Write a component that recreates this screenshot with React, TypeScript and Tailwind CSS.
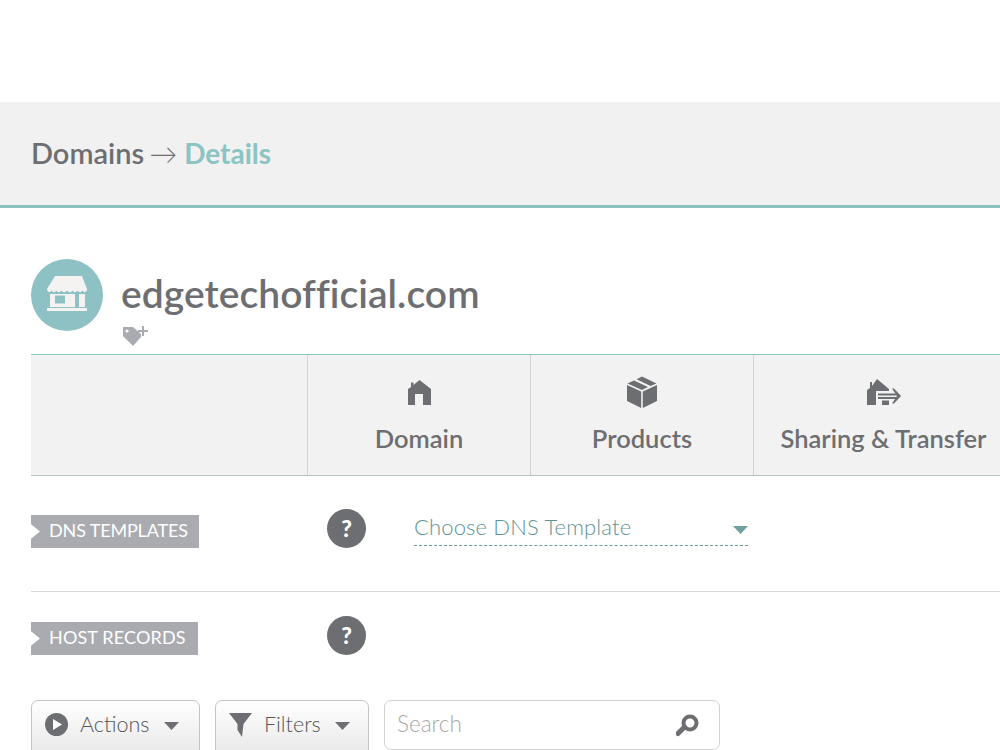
import React from "react";

const font = { fontFamily: '"Lato", "Open Sans", "Liberation Sans", sans-serif' };

function Help() {
  return (
    <div className="flex h-[39px] w-[39px] shrink-0 items-center justify-center rounded-full bg-[#6d6e71] text-[23px] font-black leading-none text-white">
      ?
    </div>
  );
}

function Ribbon({ text, w, ls }: { text: string; w: string; ls: string }) {
  return (
    <div className={`flex h-[33px] ${w} ${ls} items-center bg-[#a9abb0] pb-[3px] pl-[18px] text-[18px] font-normal leading-none text-white [clip-path:polygon(0_0,100%_0,100%_100%,0_100%,0_72%,9px_50%,0_28%)]`}>
      {text}
    </div>
  );
}

function Caret({ color }: { color: string }) {
  return (
    <svg width="15" height="8" viewBox="0 0 15 8" className="shrink-0">
      <path d="M0 0H15L7.5 8Z" fill={color} />
    </svg>
  );
}

function Tab({ icon, label, className }: { icon: React.ReactNode; label: string; className: string }) {
  return (
    <div className={`flex flex-col items-center border-l border-[#d3d3d3] pt-[20px] ${className}`}>
      <div className="flex h-[34px] items-center justify-center">{icon}</div>
      <div className="mt-[12px] whitespace-nowrap text-[25.5px] font-semibold leading-[34px] text-[#6d6e71]">{label}</div>
    </div>
  );
}

export default function App() {
  return (
    <div style={font} className="h-[750px] w-[1000px] overflow-hidden bg-white">
      <div className="h-[102px]" />
      <div className="flex h-[106px] items-center border-b-[3px] border-[#8ac0bf] bg-[#f1f1f1] pb-[2px] pl-[31px]">
        <span className="text-[29px] font-semibold text-[#6d6e71]">Domains</span>
        <span className="ml-[5px] mr-[7px] text-[28px] font-light text-[#6d6e71]">→</span>
        <span className="text-[28px] font-bold text-[#8cc3c3]">Details</span>
      </div>

      <div className="pl-[31px]">
        <div className="flex pt-[51px]">
          <div className="flex h-[72px] w-[72px] items-center justify-center rounded-full bg-[#8dc1c3]">
            <svg width="42" height="38" viewBox="0 0 42 38">
              <path d="M9 0H36L41 13V14H1V13Z" fill="#f5f3f1" />
              <path d="M1 14H41L39 16.5L36.5 14.8L34 16.5L31.5 14.8L29 16.5L26.5 14.8L24 16.5L21 14.8L18 16.5L15.5 14.8L13 16.5L10.5 14.8L8 16.5L5.5 14.8L3 16.5Z" fill="#f5f3f1" />
              <path fillRule="evenodd" d="M4 18H39V31H33V18H29V31H4ZM9 19.5V27.5H19V19.5Z" fill="#f5f3f1" />
              <rect x="1" y="32" width="40" height="3" fill="#f5f3f1" />
            </svg>
          </div>
          <div className="ml-[18px]">
            <div className="mt-[12px] whitespace-nowrap text-[39px] font-semibold leading-[44px] tracking-[0.05px] text-[#6d6e71]">edgetechofficial.com</div>
            <svg width="26" height="22" viewBox="0 0 26 22" className="ml-[2px] mt-[10px]">
              <path d="M0 2H10L18 9V12L10 21L0 11Z" fill="#a9abb0" />
              <circle cx="4" cy="6" r="1.6" fill="#fff" />
              <path d="M19 1H21V5H25V7H21V11H19V7H15V5H19Z" fill="#a9abb0" />
            </svg>
          </div>
        </div>

        <div className="mt-[7px] flex h-[122px] border-b border-t border-b-[#a9c4c1] border-t-[#86c7bb] bg-[#f2f2f2]">
          <div className="w-[276px] shrink-0" />
          <Tab
            className="w-[223px] shrink-0"
            label="Domain"
            icon={
              <svg width="23" height="25" viewBox="0 0 23 25" className="mt-[1px]">
                <path fillRule="evenodd" d="M0 9L3 7V2.5H5.5V5L11.5 0L23 9V25H15V14H7V25H0Z" fill="#6d6e71" />
              </svg>
            }
          />
          <Tab
            className="w-[223px] shrink-0"
            label="Products"
            icon={
              <svg width="32" height="32" viewBox="0 0 32 32">
                <path d="M1 9L15.2 15.5V32L1 25Z" fill="#6d6e71" />
                <path d="M31 9L16.8 15.5V32L31 25Z" fill="#6d6e71" />
                <path d="M1.5 7.5L8 4.4L22 11L16 14Z" fill="#6d6e71" />
                <path d="M10.5 3.2L16 0.5L30.5 7.5L24.5 10Z" fill="#6d6e71" />
              </svg>
            }
          />
          <Tab
            className="w-[260px] shrink-0"
            label="Sharing & Transfer"
            icon={
              <svg width="34" height="26" viewBox="0 0 34 26">
                <path d="M0 11L3 9V3H5V7L10 0L22 10V12H9V26H0Z" fill="#6d6e71" />
                <rect x="11" y="14.5" width="19" height="2" fill="#6d6e71" />
                <rect x="11" y="18" width="19" height="2" fill="#6d6e71" />
                <path d="M25 9.5L27 9.5L34 17L27 24.5L25 24.5L30 17Z" fill="#6d6e71" />
                <rect x="15" y="21.5" width="7" height="4.5" fill="#6d6e71" />
              </svg>
            }
          />
        </div>

        <div className="flex h-[116px] items-start border-b border-[#d8d8d8]">
          <div className="mt-[39px] w-[296px] shrink-0">
            <Ribbon text="DNS TEMPLATES" w="w-[168px]" ls="tracking-[-0.15px]" />
          </div>
          <div className="mt-[33px]">
            <Help />
          </div>
          <div className="ml-[48px] mt-[37px] flex h-[33px] w-[334px] items-center justify-between border-b border-dashed border-[#6a9a98] pb-[4px] pr-[0px]">
            <span className="text-[22px] font-light leading-none tracking-[0.15px] text-[#5f9493]">Choose DNS Template</span>
            <span className="mt-[5px]">
              <Caret color="#6f9f9e" />
            </span>
          </div>
        </div>

        <div className="flex h-[108px] items-start">
          <div className="mt-[30px] w-[296px] shrink-0">
            <Ribbon text="HOST RECORDS" w="w-[167px]" ls="tracking-[0.15px]" />
          </div>
          <div className="mt-[24px]">
            <Help />
          </div>
        </div>

        <div className="flex h-[60px] items-start">
          <div className="flex h-[60px] w-[169px] items-start rounded-[7px] border border-[#c4c4c4] bg-gradient-to-b from-white to-[#e6e6e6] pl-[13px] pt-[12px]">
            <div className="flex h-[23px] w-[23px] items-center justify-center rounded-full bg-[#6d6e71]">
              <svg width="9" height="11" viewBox="0 0 9 11" className="ml-[2px]">
                <path d="M0 0L9 5.5L0 11Z" fill="#fff" />
              </svg>
            </div>
            <span className="ml-[12px] text-[21.5px] font-light leading-[22px] text-[#55565a]">Actions</span>
            <span className="ml-[15px] mt-[9px]">
              <Caret color="#6d6e71" />
            </span>
          </div>
          <div className="ml-[15px] flex h-[60px] w-[154px] items-start rounded-[7px] border border-[#c4c4c4] bg-gradient-to-b from-white to-[#e6e6e6] pl-[13px] pt-[12px]">
            <svg width="23" height="24" viewBox="0 0 23 24" className="shrink-0">
              <path d="M0 0H23L14.5 11L13 24L8.5 17V11Z" fill="#6d6e71" />
            </svg>
            <span className="ml-[12px] text-[21.5px] font-light leading-[22px] text-[#55565a]">Filters</span>
            <span className="ml-[14px] mt-[9px]">
              <Caret color="#6d6e71" />
            </span>
          </div>
          <div className="ml-[15px] flex h-[50px] w-[336px] items-center justify-between rounded-[7px] border border-[#d2d2d2] bg-white pl-[12px] pr-[20px]">
            <span className="pb-[2px] text-[22.5px] font-light leading-none text-[#a8a8a8]">Search</span>
            <svg width="23" height="23" viewBox="0 0 23 23">
              <circle cx="14" cy="9" r="6.5" fill="none" stroke="#6d6e71" strokeWidth="4" />
              <path d="M8.5 13L2 19.5" stroke="#6d6e71" strokeWidth="5" strokeLinecap="round" />
            </svg>
          </div>
        </div>
      </div>
    </div>
  );
}
